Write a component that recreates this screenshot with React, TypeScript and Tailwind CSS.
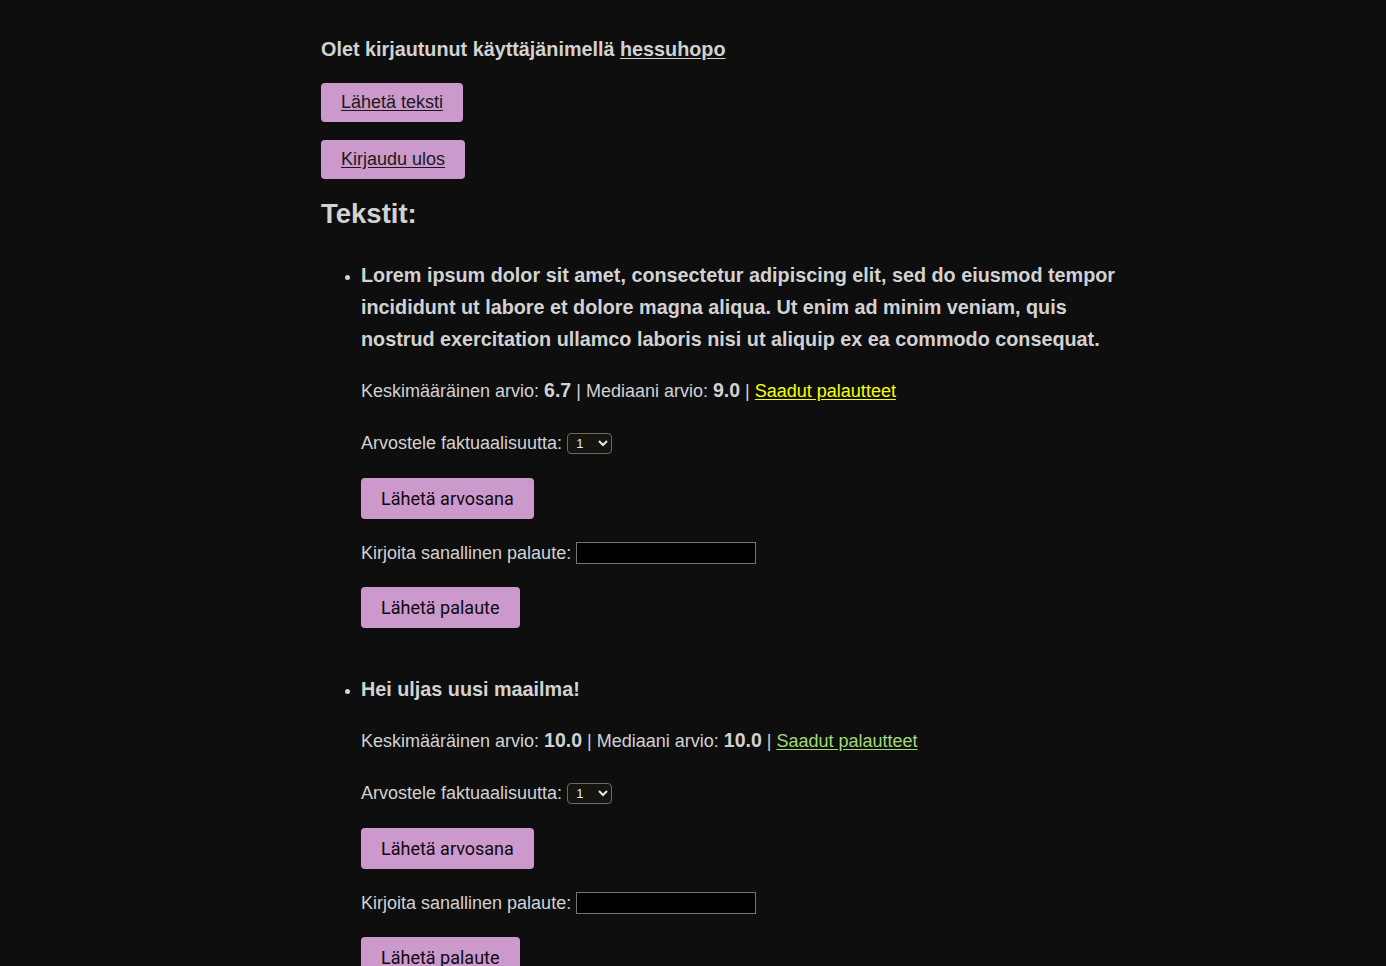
import React from "react";

const sans = "font-['Liberation_Sans',Arial,sans-serif]";

function ActionButton({ children }: { children: React.ReactNode }) {
  return (
    <button className="block rounded-[4px] bg-[#cc99cc] px-5 py-[10px] text-[18px] leading-[21px] font-normal text-[#0f0a0f] font-['Roboto',sans-serif]">
      {children}
    </button>
  );
}

function LinkButton({ children }: { children: React.ReactNode }) {
  return (
    <a className="inline-block rounded-[4px] bg-[#cc99cc] px-5 py-[9px] text-[18px] leading-[21px] text-[#1a1a1a] underline underline-offset-2">
      {children}
    </a>
  );
}

function Item({
  text,
  avg,
  median,
  linkColor,
  first,
}: {
  text: string;
  avg: string;
  median: string;
  linkColor: string;
  first?: boolean;
}) {
  return (
    <li className={first ? "" : "mt-[45px]"}>
      <div className="text-[19.8px] font-bold leading-[32px]">{text}</div>
      <p className="mt-[25px] text-[18px] leading-[21px]">
        Keskimääräinen arvio: <b className="text-[19.5px]">{avg}</b> | Mediaani arvio:{" "}
        <b className="text-[19.5px]">{median}</b> |{" "}
        <a className={`underline underline-offset-2 ${linkColor}`}>Saadut palautteet</a>
      </p>
      <div className="mt-[31px] flex items-center text-[18px] leading-[21px]">
        <span>Arvostele faktuaalisuutta:</span>
        <select className="ml-[5px] h-[21px] w-[45px] rounded-[4px] border border-[#6b6b5e] bg-[#141410] pl-[4px] text-[13px] text-[#e8e8e8] scheme-dark">
          <option>1</option>
        </select>
      </div>
      <div className="mt-[24px]">
        <ActionButton>Lähetä arvosana</ActionButton>
      </div>
      <div className="mt-[23px] flex items-center text-[18px] leading-[21px]">
        <span>Kirjoita sanallinen palaute:</span>
        <input className="ml-[5px] h-[22px] w-[180px] border border-[#76766a] bg-black" />
      </div>
      <div className="mt-[23px]">
        <ActionButton>Lähetä palaute</ActionButton>
      </div>
    </li>
  );
}

export default function App() {
  return (
    <div className={`min-h-[966px] bg-[#0e0e0e] text-[#d2d2d2] ${sans}`}>
      <div className="ml-[321px] w-[805px] pt-[37px] pb-10">
        <div className="text-[19.8px] font-bold leading-[24px]">
          Olet kirjautunut käyttäjänimellä <a className="underline underline-offset-2">hessuhopo</a>
        </div>
        <div className="mt-[22px]">
          <LinkButton>Lähetä teksti</LinkButton>
        </div>
        <div className="mt-[18px]">
          <LinkButton>Kirjaudu ulos</LinkButton>
        </div>
        <h2 className="mt-[20px] text-[27.5px] font-bold leading-[30px]">Tekstit:</h2>
        <ul className="mt-[30px] list-disc pl-10">
          <Item
            first
            text="Lorem ipsum dolor sit amet, consectetur adipiscing elit, sed do eiusmod tempor incididunt ut labore et dolore magna aliqua. Ut enim ad minim veniam, quis nostrud exercitation ullamco laboris nisi ut aliquip ex ea commodo consequat."
            avg="6.7"
            median="9.0"
            linkColor="text-[#ffff00]"
          />
          <Item
            text="Hei uljas uusi maailma!"
            avg="10.0"
            median="10.0"
            linkColor="text-[#a3d977]"
          />
        </ul>
      </div>
    </div>
  );
}
